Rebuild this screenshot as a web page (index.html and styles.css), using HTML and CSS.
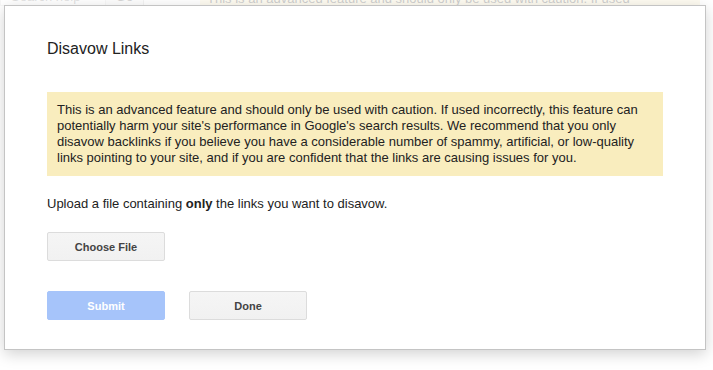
FILE: index.html
```html
<!DOCTYPE html>
<html>
<head>
<meta charset="utf-8">
<link rel="stylesheet" href="styles.css">
</head>
<body>
<div class="page">
  <div class="search">
    <div class="search-input">Search help</div>
    <div class="search-go">Go</div>
  </div>
  <div class="page-warning">This is an advanced feature and should only be used with caution. If used</div>
</div>
<div class="overlay"></div>
<div class="dialog">
  <h1 class="title">Disavow Links</h1>
  <div class="warning">This is an advanced feature and should only be used with caution. If used incorrectly, this feature can potentially harm your site's performance in Google's search results. We recommend that you only disavow backlinks if you believe you have a considerable number of spammy, artificial, or low-quality links pointing to your site, and if you are confident that the links are causing issues for you.</div>
  <p class="upload">Upload a file containing <b>only</b> the links you want to disavow.</p>
  <div class="file-row"><button class="btn">Choose File</button></div>
  <div class="actions">
    <button class="btn btn-submit">Submit</button>
    <button class="btn">Done</button>
  </div>
</div>
</body>
</html>
```

FILE: styles.css
```css
html, body {
  margin: 0;
  padding: 0;
  background: #fff;
  font-family: "Liberation Sans", Arial, sans-serif;
  font-size: 13px;
  color: #222;
  overflow: hidden;
  height: 100%;
}

.page {
  position: relative;
  height: 100%;
}

.search {
  position: absolute;
  left: 0;
  top: -12px;
  display: flex;
}

.search-input {
  width: 94px;
  height: 16px;
  padding: 0 0 0 10px;
  border: 1px solid #d9d9d9;
  line-height: 16px;
  color: #777;
}

.search-go {
  width: 37px;
  height: 16px;
  border: 1px solid #c6c6c6;
  border-left: none;
  text-align: center;
  line-height: 16px;
  color: #444;
  background: #f3f3f3;
}

.page-warning {
  position: absolute;
  left: 200px;
  top: -9px;
  width: 486px;
  padding: 0 7px;
  line-height: 16px;
  background: #f9edbe;
  color: #222;
  white-space: nowrap;
  overflow: hidden;
}

.overlay {
  position: absolute;
  inset: 0;
  background: rgba(255, 255, 255, 0.78);
}

.dialog {
  position: absolute;
  left: 4px;
  top: 5px;
  width: 702px;
  box-sizing: border-box;
  background: #fff;
  border: 1px solid #c4c4c4;
  box-shadow: 0 4px 14px rgba(0, 0, 0, 0.18);
  padding: 33px 42px 29px 42px;
}

.title {
  margin: 0;
  font-size: 16px;
  font-weight: normal;
  line-height: 20px;
  color: #222;
}

.warning {
  margin-top: 33px;
  background: #f9edbe;
  padding: 10px 10px;
  line-height: 16px;
  color: #222;
}

.upload {
  margin: 20px 0 0 0;
  line-height: 16px;
}

.file-row {
  margin-top: 20px;
  display: flex;
}

.actions {
  margin-top: 30px;
  display: flex;
  gap: 24px;
}

.btn {
  width: 118px;
  height: 29px;
  box-sizing: border-box;
  border: 1px solid #dcdcdc;
  border-radius: 2px;
  background: linear-gradient(#f5f5f5, #f1f1f1);
  font-family: "Liberation Sans", Arial, sans-serif;
  font-size: 11px;
  font-weight: bold;
  color: #444;
  padding: 0;
}

.btn-submit {
  background: #a6c4fa;
  border-color: #a6c4fa;
  color: #fff;
}
```
